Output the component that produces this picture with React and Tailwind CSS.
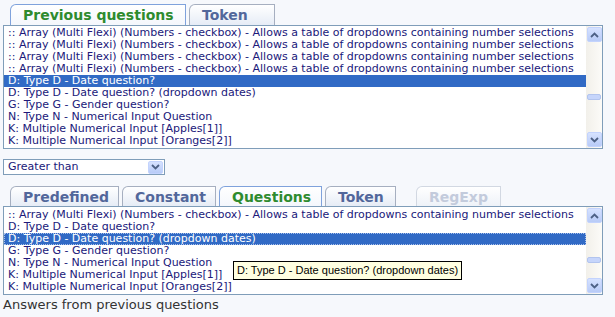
import React from 'react';

const arrayRow =
	':: Array (Multi Flexi) (Numbers - checkbox) - Allows a table of dropdowns containing number selections';

const topRows = [
	{ text: arrayRow },
	{ text: arrayRow },
	{ text: arrayRow },
	{ text: arrayRow },
	{ text: 'D: Type D - Date question?', selected: true },
	{ text: 'D: Type D - Date question? (dropdown dates)' },
	{ text: 'G: Type G - Gender question?' },
	{ text: 'N: Type N - Numerical Input Question' },
	{ text: 'K: Multiple Numerical Input [Apples[1]]' },
	{ text: 'K: Multiple Numerical Input [Oranges[2]]' },
];

const bottomRows = [
	{ text: arrayRow },
	{ text: 'D: Type D - Date question?' },
	{ text: 'D: Type D - Date question? (dropdown dates)', selected: true, focus: true },
	{ text: 'G: Type G - Gender question?' },
	{ text: 'N: Type N - Numerical Input Question' },
	{ text: 'K: Multiple Numerical Input [Apples[1]]' },
	{ text: 'K: Multiple Numerical Input [Oranges[2]]' },
];

const font = { fontFamily: '"DejaVu Sans", Verdana, sans-serif' };

// Tab on top of a listbox
const Tab = ({ label, width, active, disabled }) => {
	let color = 'text-[#52679b]';
	if (active) color = 'text-[#2e8b2e]';
	if (disabled) color = 'text-[#c3cbdc]';
	return (
		<div
			className={`h-full shrink-0 overflow-hidden rounded-tl-[6px] border-t border-l border-r pl-[12px] text-[14px] font-bold leading-[20px] whitespace-nowrap ${
				active
					? 'border-[#7fa2dc] bg-gradient-to-b from-white to-[#f4f7fc]'
					: disabled
					? 'border-[#d2d8e2] bg-gradient-to-b from-white to-[#eef2f8]'
					: 'border-[#a6afc0] bg-gradient-to-b from-white to-[#e6ecf6]'
			} ${color}`}
			style={{ width, ...font }}
		>
			{label}
		</div>
	);
};

const ScrollButton = ({ down }) => (
	<div className="flex h-[15px] w-[15px] items-center justify-center rounded-[2px] border border-[#c3d3fd] bg-gradient-to-b from-[#d6e2ff] to-[#b8cbf7]">
		<svg width="9" height="6" viewBox="0 0 9 6">
			<path
				d={down ? 'M1 1 L4.5 4.5 L8 1' : 'M1 5 L4.5 1.5 L8 5'}
				fill="none"
				stroke="#4d6185"
				strokeWidth="1.8"
			/>
		</svg>
	</div>
);

// Fake listbox with a classic scrollbar
const ListBox = ({ rows, height, thumbTop, padTop }) => (
	<div
		className="flex border border-[#7f9db9] bg-white"
		style={{ height }}
	>
		<div className={`flex-1 overflow-hidden ${padTop}`}>
			{rows.map((row, i) => (
				<div
					key={i}
					className={`h-[12px] pl-[4px] text-[11px] leading-[12px] whitespace-nowrap ${
						row.selected ? 'bg-[#316ac5] text-white' : 'text-[#20187a]'
					} ${
						row.focus
							? 'outline outline-1 outline-dotted -outline-offset-1 outline-[#a9c0ea]'
							: ''
					}`}
					style={font}
				>
					{row.text}
				</div>
			))}
		</div>
		<div className="relative flex w-[16px] flex-col items-center justify-between bg-gradient-to-r from-[#f2f0ea] to-[#fcfbf8] py-[1px]">
			<ScrollButton />
			<div
				className="absolute left-[1px] h-[6px] w-[14px] rounded-[2px] border border-[#b2c4ee] bg-[#c6d5fb]"
				style={{ top: thumbTop }}
			/>
			<ScrollButton down />
		</div>
	</div>
);

const App = () => {
	return (
		<div className="relative h-[317px] w-[615px] overflow-hidden bg-[#f6f8fc] px-[3px] pt-[4px]" style={font}>
			{/* Previous questions / Token tabs */}
			<div className="flex h-[21px] items-end gap-[3px] pl-[7px]">
				<Tab label="Previous questions" width={176} active />
				<Tab label="Token" width={86} />
			</div>
			<div className="w-[600px]">
				<ListBox rows={topRows} height={124} thumbTop={68} padTop="pt-[1px]" />
			</div>

			{/* Operator select */}
			<div className="mt-[10px] flex h-[16px] w-[162px] items-center border border-[#7f9db9] bg-white">
				<div className="flex-1 pl-[4px] text-[11px] leading-[14px] text-[#20187a]">
					Greater than
				</div>
				<div className="mr-[1px] flex h-[13px] w-[15px] items-center justify-center rounded-[2px] border border-[#c3d3fd] bg-gradient-to-b from-[#d6e2ff] to-[#b8cbf7]">
					<svg width="9" height="6" viewBox="0 0 9 6">
						<path d="M1 1 L4.5 4.5 L8 1" fill="none" stroke="#4d6185" strokeWidth="1.8" />
					</svg>
				</div>
			</div>

			{/* Value source tabs */}
			<div className="mt-[11px] flex h-[20px] items-end gap-[3px] pl-[7px]">
				<Tab label="Predefined" width={109} />
				<Tab label="Constant" width={94} />
				<Tab label="Questions" width={103} active />
				<Tab label="Token" width={71} />
				<div className="w-[14px]" />
				<Tab label="RegExp" width={85} disabled />
			</div>
			<div className="w-[600px]">
				<ListBox rows={bottomRows} height={89} thumbTop={50} padTop="pt-[2px]" />
			</div>

			<div className="mt-[2px] text-[13px] leading-[15px] text-[#333]">
				Answers from previous questions
			</div>

			{/* Hover tooltip */}
			<div
				className="absolute left-[233px] top-[261px] h-[19px] border border-black bg-[#ffffe1] px-[3px] text-[11px] leading-[17px] text-black whitespace-nowrap"
				style={{ fontFamily: '"Liberation Sans", Arial, sans-serif' }}
			>
				D: Type D - Date question? (dropdown dates)
			</div>
		</div>
	);
};

export default App;
